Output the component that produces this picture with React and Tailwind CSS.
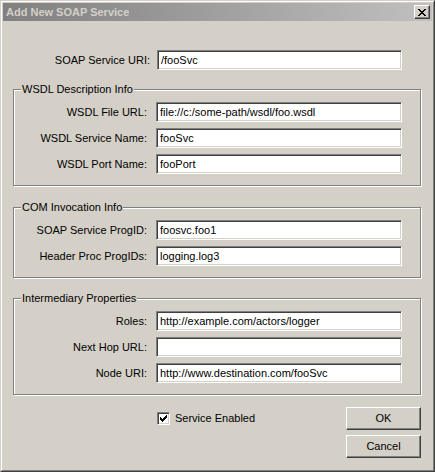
import React from "react";

// Classic 3D-style bits: sunken edit box, raised push button, etched group box.
function Edit({ value, className }) {
  return (
    <div
      className={
        "h-[20px] flex items-center pl-[3px] bg-white text-black whitespace-nowrap overflow-hidden border border-t-[#808080] border-l-[#808080] border-r-white border-b-white shadow-[inset_1px_1px_0_#404040,inset_-1px_-1px_0_#d4d0c8] " +
        className
      }
    >
      {value}
    </div>
  );
}

function GroupRow({ label, value }) {
  return (
    <div className="flex items-center">
      <div className="w-[133px] text-right">{label}</div>
      <Edit value={value} className="ml-[9px] w-[246px]" />
    </div>
  );
}

function Group({ title, children, className }) {
  return (
    <div
      className={
        "relative w-[408px] border border-[#808080] shadow-[inset_1px_1px_0_#fff,1px_1px_0_#fff] pt-[12px] pb-[11px] flex flex-col gap-[6px] " +
        className
      }
    >
      <span className="absolute -top-[7px] left-[7px] px-[1px] bg-[#d4d0c8] leading-[13px]">
        {title}
      </span>
      {children}
    </div>
  );
}

function Button({ children, className }) {
  return (
    <div
      className={
        "w-[75px] h-[23px] flex items-center justify-center bg-[#d4d0c8] border border-t-white border-l-white border-r-[#404040] border-b-[#404040] shadow-[inset_-1px_-1px_0_#808080] " +
        (className || "")
      }
    >
      {children}
    </div>
  );
}

// Pixel glyphs drawn as 1px cells
function PixelGlyph({ rows, w, h }) {
  const rects = [];
  rows.forEach((row, y) => {
    row.split("").forEach((c, x) => {
      if (c === "X") rects.push(<rect key={x + "-" + y} x={x} y={y} width="1" height="1" />);
    });
  });
  return (
    <svg width={w} height={h} viewBox={`0 0 ${w} ${h}`} shapeRendering="crispEdges" fill="#000">
      {rects}
    </svg>
  );
}

const CLOSE = ["XX....XX", ".XX..XX.", "..XXXX..", "...XX...", "..XXXX..", ".XX..XX.", "XX....XX"];
const CHECK = ["......X", ".....XX", "X...XXX", "XX.XXX.", "XXXXX..", ".XXX...", "..X...."];

export default function App() {
  return (
    <div className="w-[435px] h-[472px] bg-[#d4d0c8] text-black text-[11px] font-['Liberation_Sans',Arial,sans-serif] border border-t-[#d4d0c8] border-l-[#d4d0c8] border-r-[#404040] border-b-[#404040]">
      <div className="h-full flex flex-col p-[1px] border border-t-white border-l-white border-r-[#808080] border-b-[#808080]">
        {/* caption */}
        <div className="h-[18px] shrink-0 flex items-center justify-between pl-[3px] pr-[2px] bg-linear-to-r from-[#808080] to-[#c0c0c0]">
          <span className="font-bold text-[#d4d0c8]">Add New SOAP Service</span>
          <div className="w-[16px] h-[14px] flex items-center justify-center bg-[#d4d0c8] border border-t-white border-l-white border-r-[#404040] border-b-[#404040] shadow-[inset_-1px_-1px_0_#808080]">
            <PixelGlyph rows={CLOSE} w={8} h={7} />
          </div>
        </div>

        {/* dialog body */}
        <div className="flex flex-col pl-[10px] pr-[11px]">
          <div className="mt-[29px] flex items-center">
            <div className="w-[137px] text-right">SOAP Service URI:</div>
            <Edit value="/fooSvc" className="ml-[7px] w-[245px]" />
          </div>

          <Group title="WSDL Description Info" className="mt-[19px]">
            <GroupRow label="WSDL File URL:" value="file://c:/some-path/wsdl/foo.wsdl" />
            <GroupRow label="WSDL Service Name:" value="fooSvc" />
            <GroupRow label="WSDL Port Name:" value="fooPort" />
          </Group>

          <Group title="COM Invocation Info" className="mt-[21px]">
            <GroupRow label="SOAP Service ProgID:" value="foosvc.foo1" />
            <GroupRow label="Header Proc ProgIDs:" value="logging.log3" />
          </Group>

          <Group title="Intermediary Properties" className="mt-[20px]">
            <GroupRow label="Roles:" value="http://example.com/actors/logger" />
            <GroupRow label="Next Hop URL:" value="" />
            <GroupRow label="Node URI:" value="http://www.destination.com/fooSvc" />
          </Group>

          <div className="mt-[12px] flex items-start">
            <div className="ml-[144px] h-[23px] flex items-center">
              <div className="w-[13px] h-[13px] flex items-center justify-center bg-white border border-t-[#808080] border-l-[#808080] border-r-white border-b-white shadow-[inset_1px_1px_0_#404040,inset_-1px_-1px_0_#d4d0c8]">
                <PixelGlyph rows={CHECK} w={7} h={7} />
              </div>
              <span className="ml-[5px]">Service Enabled</span>
            </div>
            <div className="ml-auto flex flex-col gap-[5px]">
              <Button>OK</Button>
              <Button>Cancel</Button>
            </div>
          </div>
        </div>
      </div>
    </div>
  );
}
